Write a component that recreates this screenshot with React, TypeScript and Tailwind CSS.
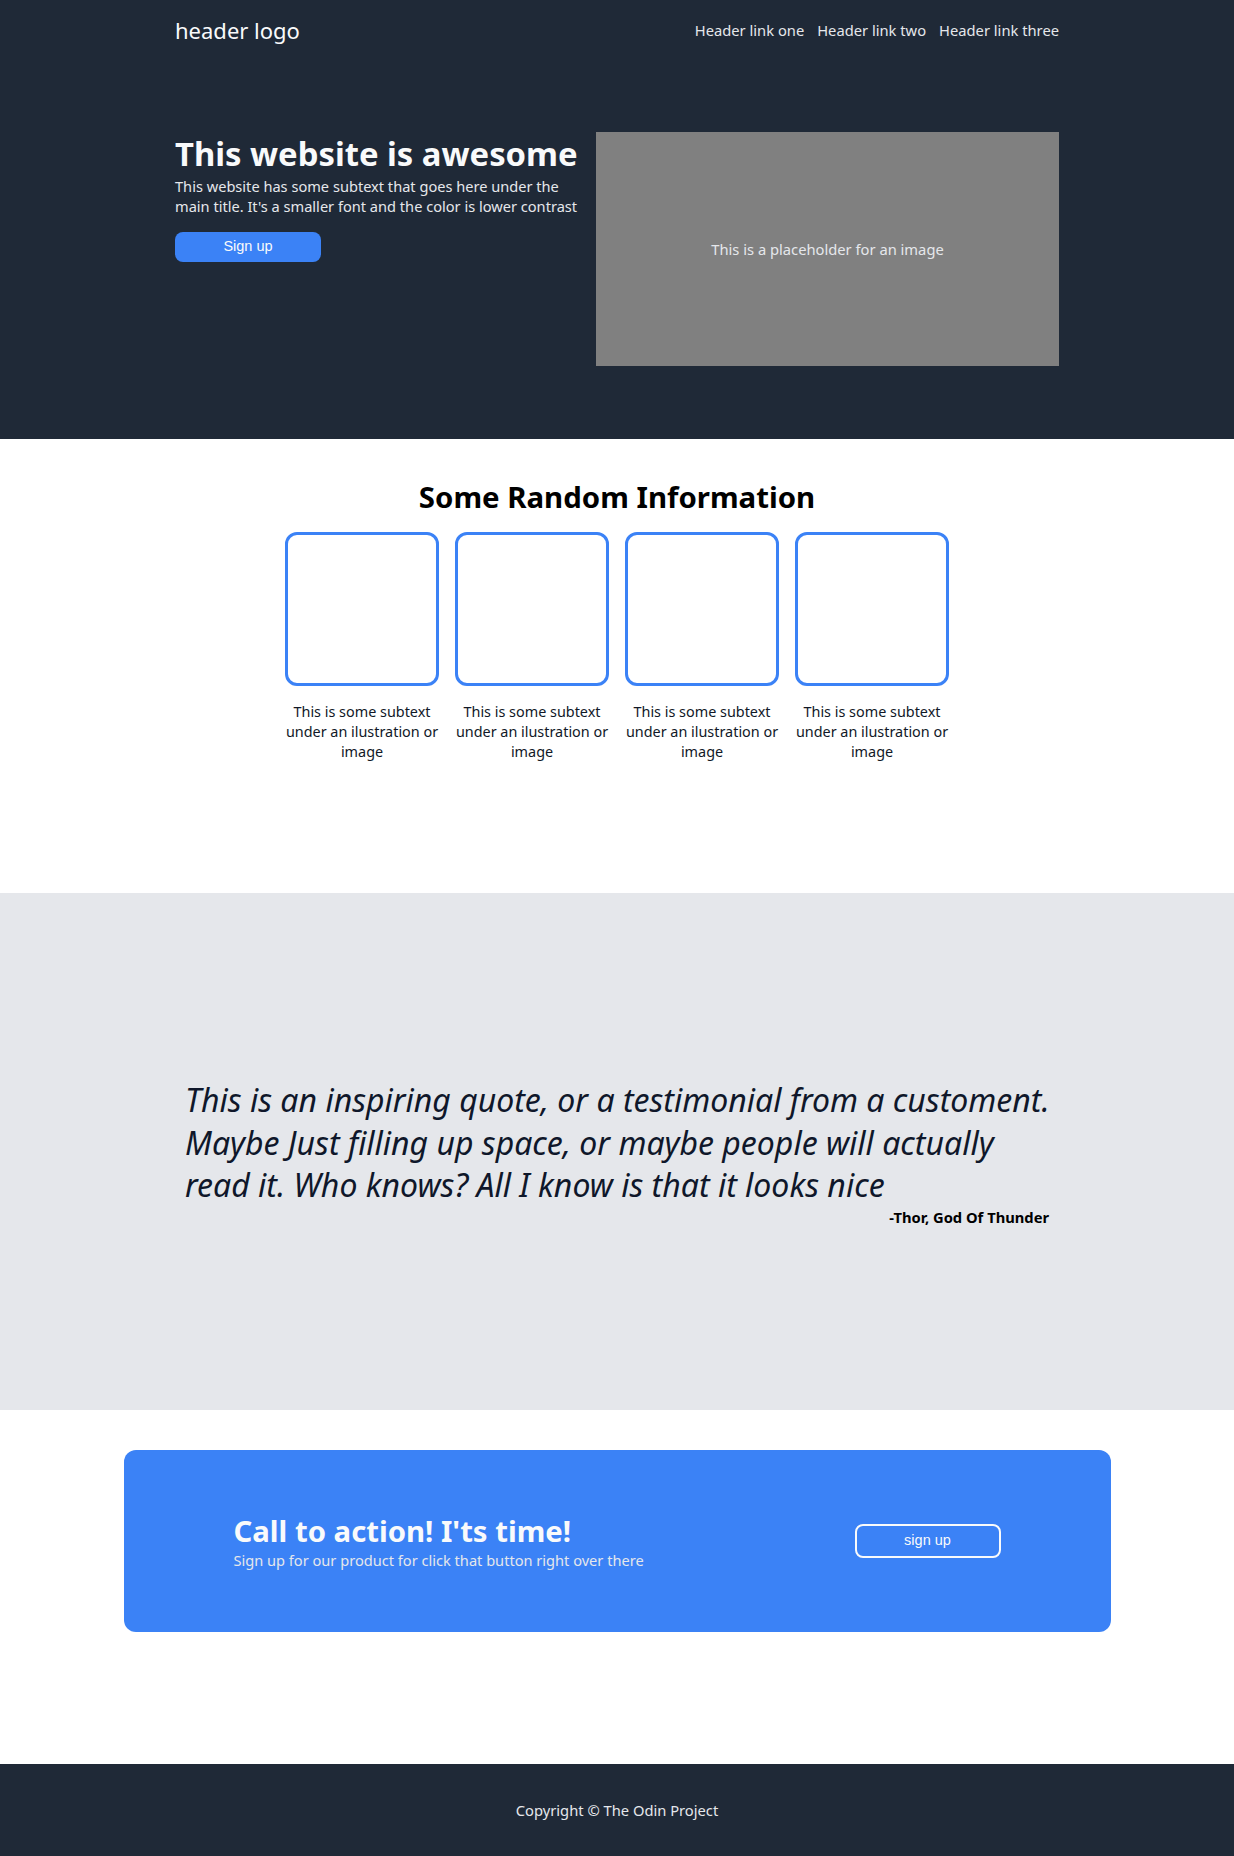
import React from "react";

const cards = [1, 2, 3, 4];

export default function App() {
  return (
    <div className="min-h-[1856px] flex flex-col bg-white text-[14.72px] text-[#111827]" style={{ fontFamily: '"Noto Sans", sans-serif' }}>
      <div className="bg-[#1f2937] h-[439px] flex flex-col">
        <header className="w-[884px] mx-auto h-[60px] flex items-center justify-between">
          <div className="text-[22px] text-[#f9fafb]">header logo</div>
          <nav className="flex gap-[13px] text-[14.72px] text-[#e5e7eb]">
            <a>Header link one</a>
            <a>Header link two</a>
            <a>Header link three</a>
          </nav>
        </header>
        <section className="w-[884px] mx-auto mt-[72px] flex gap-[8px]">
          <div className="w-[413px] flex flex-col">
            <h1 className="text-[32.8px] font-bold text-[#f9fafb] leading-[44px]">This website is awesome</h1>
            <p className="text-[#e5e7eb] leading-[20px] text-[14.6px]">
              This website has some subtext that goes here under the main title. It's a smaller font and the color is lower contrast
            </p>
            <button className="mt-[16px] w-[146px] h-[30px] rounded-lg bg-[#3b82f6] text-[#f9fafb] text-[14.5px]" style={{ fontFamily: '"Liberation Sans", Arial, sans-serif' }}>
              Sign up
            </button>
          </div>
          <div className="flex-1 h-[234px] bg-[#808080] flex items-center justify-center text-[#e5e7eb]">
            This is a placeholder for an image
          </div>
        </section>
      </div>

      <section className="h-[454px] flex flex-col items-center pt-[38px]">
        <h2 className="text-[29.4px] font-bold text-black leading-[40px]">Some Random Information</h2>
        <div className="mt-[15px] flex gap-4">
          {cards.map((c) => (
            <div key={c} className="w-[154px] flex flex-col items-center">
              <div className="w-[154px] h-[154px] border-[3px] border-[#3b82f6] rounded-[12px]" />
              <p className="mt-[16px] w-[160px] text-center leading-[20px] text-[14.4px] text-[#111827]">
                This is some subtext under an ilustration or image
              </p>
            </div>
          ))}
        </div>
      </section>

      <section className="h-[517px] bg-[#e5e7eb] flex items-center justify-center pt-[3px]">
        <div className="w-[864px] flex flex-col">
          <p className="w-[872px] italic text-[32px] leading-[42.6px] text-[#0f172a]">
            This is an inspiring quote, or a testimonial from a customent. Maybe Just filling up space, or maybe people will actually read it. Who knows? All I know is that it looks nice
          </p>
          <p className="self-end font-bold text-[14.72px] leading-[20px] text-black">-Thor, God Of Thunder</p>
        </div>
      </section>

      <section className="pt-[40px] pb-[132px] flex justify-center">
        <div className="w-[987px] h-[182px] bg-[#3b82f6] rounded-[12px] flex items-center justify-between px-[110px]">
          <div className="flex flex-col text-[#f9fafb]">
            <h3 className="text-[29.3px] font-bold leading-[38px]">Call to action! I'ts time!</h3>
            <p className="text-[14.6px] leading-[20px] text-[#e5e7eb]">Sign up for our product for click that button right over there</p>
          </div>
          <button className="w-[146px] h-[34px] border-2 border-[#f9fafb] rounded-lg text-[#f9fafb] text-[14.5px]" style={{ fontFamily: '"Liberation Sans", Arial, sans-serif' }}>
            sign up
          </button>
        </div>
      </section>

      <footer className="h-[92px] bg-[#1f2937] flex items-center justify-center text-[#e5e7eb]">
        Copyright © The Odin Project
      </footer>
    </div>
  );
}
